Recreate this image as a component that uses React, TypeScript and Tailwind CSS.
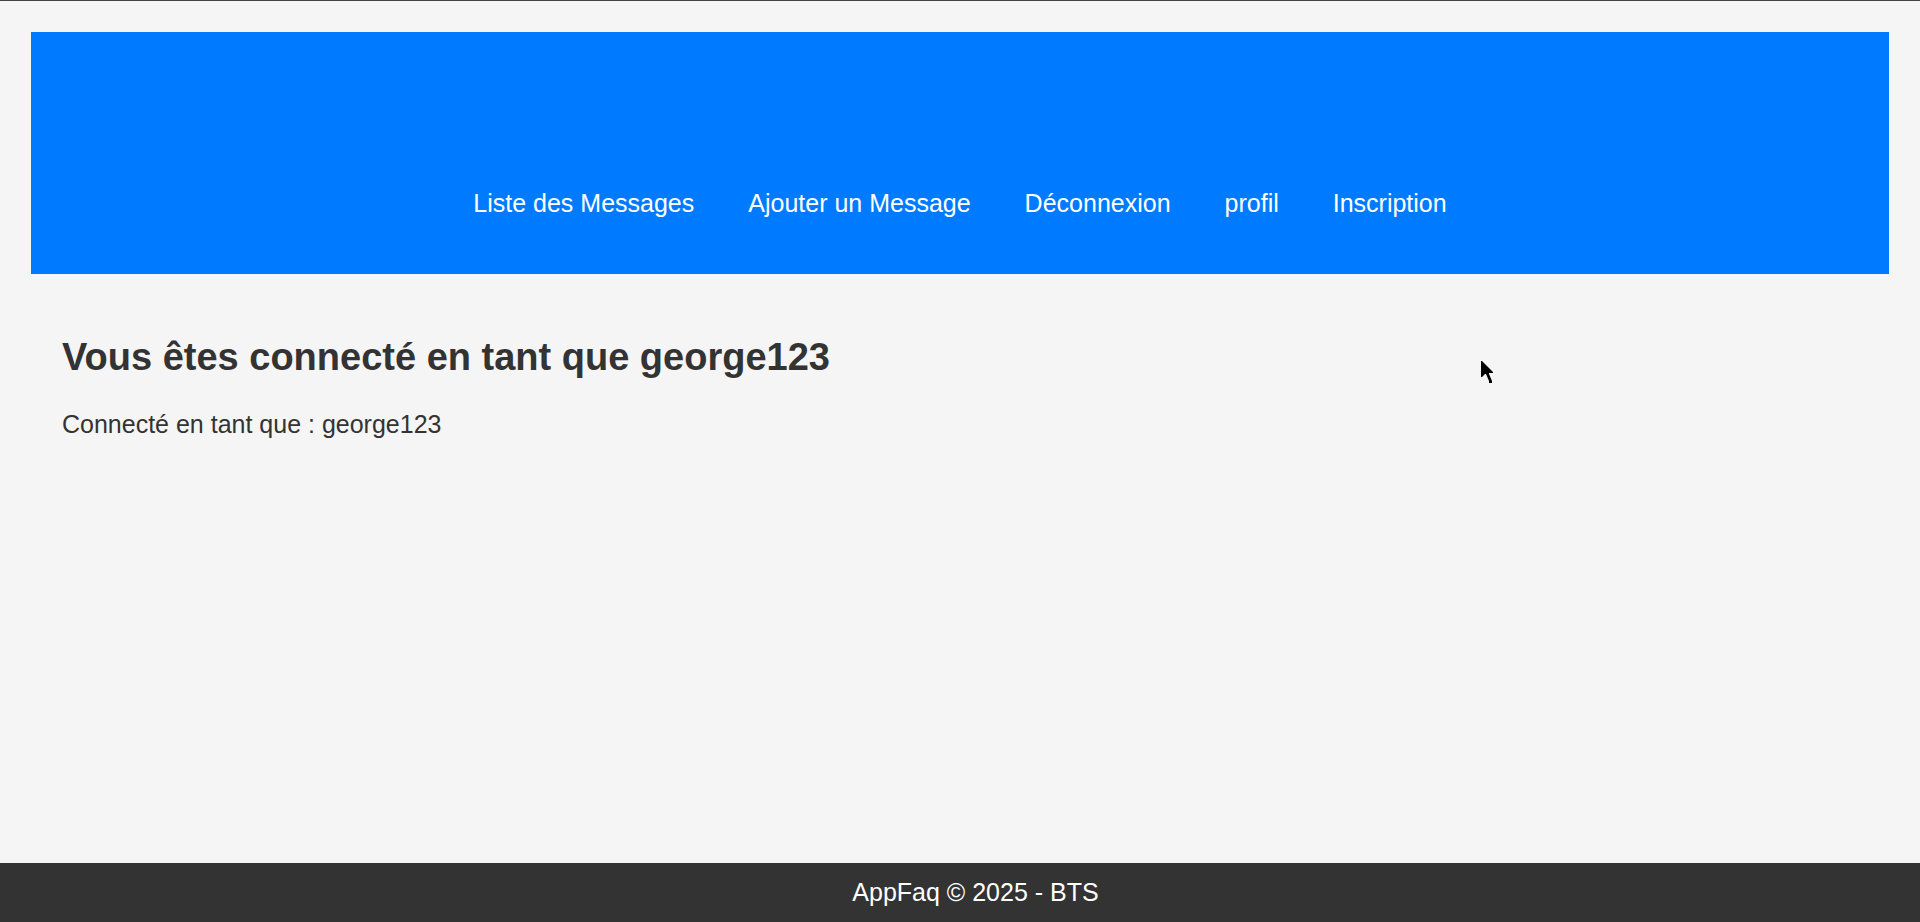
const links = ["Liste des Messages", "Ajouter un Message", "Déconnexion", "profil", "Inscription"];

export default function App() {
  return (
    <div className="flex min-h-screen flex-col border-t border-[#444444] bg-[#f5f5f5] font-['Liberation_Sans',Arial,sans-serif] text-[#333333]">
      <header className="mx-[31px] mt-[31px] flex justify-center bg-[#007bff] px-8 pt-[151px] pb-[51px]">
        <nav>
          <ul className="flex gap-[54px]">
            {links.map((label) => (
              <li key={label}>
                <a href="#" className="block text-[25px] leading-10 text-white">
                  {label}
                </a>
              </li>
            ))}
          </ul>
        </nav>
      </header>
      <main className="relative flex-1 px-[62px] pt-[61px]">
        <h1 className="text-[38px] leading-[44px] font-bold">Vous êtes connecté en tant que george123</h1>
        <p className="mt-[25px] text-[25px] leading-10">Connecté en tant que : george123</p>
        <svg aria-hidden="true" className="absolute top-[86px] left-[77.1%] h-6 w-[14px]" viewBox="0 0 14 24">
          <path
            d="M1 1V17H2L5 14H6L9 21V23H12V21L9 14V13H13V12L2 1Z"
            fill="#000"
          />
        </svg>
      </main>
      <footer className="bg-[#333333] py-[10px] pl-[31px] text-center text-[25px] leading-[39px] text-white">
        AppFaq © 2025 - BTS
      </footer>
    </div>
  );
}
